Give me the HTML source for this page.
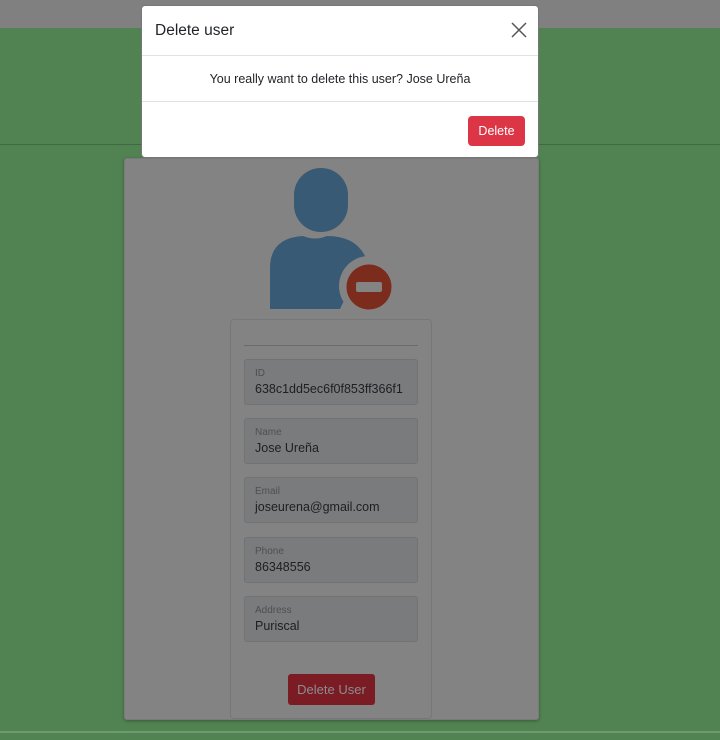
<!DOCTYPE html>
<html><head><meta charset="utf-8"><style>
*{box-sizing:border-box;margin:0;padding:0}
body{width:720px;height:740px;background:#518251;font-family:"Liberation Sans",sans-serif;position:relative;overflow:hidden}
.top{position:absolute;left:0;top:0;width:720px;height:28px;background:#808080}
.l1{position:absolute;left:0;top:144px;width:720px;height:1px;background:#3f6a3f}
.l2{position:absolute;left:0;top:731px;width:720px;height:2px;background:#6f9a6f}
.card{position:absolute;left:124px;top:158px;width:415px;height:562px;background:#838383;border:1px solid #7a7a7a;border-radius:3px;box-shadow:0 1px 3px rgba(0,0,0,.3)}
.inner{position:absolute;left:230px;top:319px;width:202px;height:400px;border:1px solid #777;border-radius:4px;background:#838383}
.hr{position:absolute;left:244px;top:345px;width:174px;height:1px;background:#6a6a6a}
.f{position:absolute;left:244px;width:174px;height:46px;background:#7a7b7d;border:1px solid #707274;border-radius:3px;padding:8px 10px}
.f small{display:block;font-size:10px;color:#4e4f50;line-height:12px}
.f div{font-size:12.5px;color:#1c1f23;line-height:17px;margin-top:1px}
.btn2{position:absolute;left:288px;top:674px;width:87px;height:31px;background:#7b1c24;border-radius:3px;color:#8a8d90;font-size:13px;text-align:center;line-height:31px}
.modal{position:absolute;left:141px;top:5px;width:398px;height:153px;background:#fff;border-radius:4px;border:1px solid #777}
.mh{height:50px;border-bottom:1px solid #dee2e6;padding:16px 13px;font-size:15.5px;color:#212529}
.x{position:absolute;right:11px;top:16px}
.mb{height:46px;border-bottom:1px solid #dee2e6;text-align:center;font-size:12.5px;color:#212529;line-height:46px}
.del{position:absolute;right:13px;top:110px;width:57px;height:30px;background:#dc3545;border-radius:4px;color:#fff;font-size:12.5px;text-align:center;line-height:30px}
</style></head><body>
<div class="top"></div><div class="l1"></div><div class="l2"></div>
<div class="card"></div>
<svg style="position:absolute;left:265px;top:166px" width="130" height="145" viewBox="0 0 130 145">
<path d="M5 143 V102 Q5 72 38 70 Q50 75 62 70 Q90 70 100 90 L75 143 Z" fill="#385a74"/>
<rect x="27" y="0" width="58" height="68" rx="29" fill="#838383"/>
<rect x="29" y="2" width="54" height="64" rx="27" fill="#385a74"/>
<circle cx="104" cy="120" r="30" fill="#838383"/>
<circle cx="104" cy="121" r="22.5" fill="#7b2c1c"/>
<rect x="91" y="116" width="26" height="10" rx="2" fill="#838383"/>
</svg>
<div class="inner"></div><div class="hr"></div>
<div class="f" style="top:359px"><small>ID</small><div>638c1dd5ec6f0f853ff366f1</div></div>
<div class="f" style="top:418px"><small>Name</small><div>Jose Ureña</div></div>
<div class="f" style="top:477px"><small>Email</small><div>joseurena@gmail.com</div></div>
<div class="f" style="top:537px"><small>Phone</small><div>86348556</div></div>
<div class="f" style="top:596px"><small>Address</small><div>Puriscal</div></div>
<div class="btn2">Delete User</div>
<div class="modal">
<div class="mh">Delete user</div>
<svg class="x" width="16" height="16" viewBox="0 0 16 16"><path d="M1 1L15 15M15 1L1 15" stroke="#555" stroke-width="1.5"/></svg>
<div class="mb">You really want to delete this user? Jose Ureña</div>
<div class="del">Delete</div>
</div>
</body></html>
